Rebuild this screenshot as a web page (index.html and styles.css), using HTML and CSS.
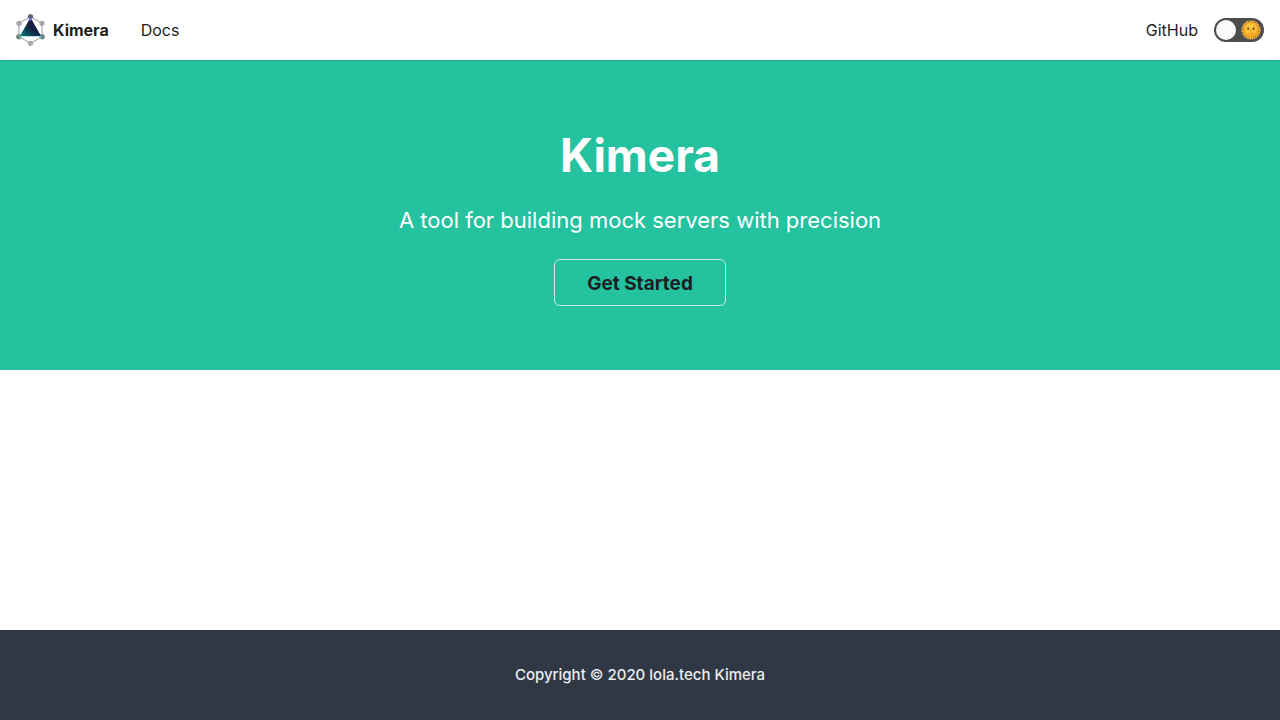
FILE: index.html
```html
<!DOCTYPE html>
<html lang="en">
<head>
  <meta charset="utf-8">
  <meta name="viewport" content="width=device-width, initial-scale=1">
  <title>Kimera</title>
  <link rel="stylesheet" href="styles.css">
</head>
<body>
  <nav class="navbar">
    <div class="navbar-items">
      <a class="brand" href="#">
        <svg class="logo" viewBox="0 0 29 32" aria-hidden="true">
          <defs>
            <linearGradient id="face" x1="0" y1="1" x2="0.75" y2="0.2">
              <stop offset="0" stop-color="#078b8c"/>
              <stop offset="0.4" stop-color="#0b3e55"/>
              <stop offset="0.65" stop-color="#12203f"/>
              <stop offset="1" stop-color="#171f49"/>
            </linearGradient>
            <linearGradient id="tip" x1="0" y1="0" x2="0" y2="1">
              <stop offset="0" stop-color="#777774"/>
              <stop offset="0.5" stop-color="#55596a"/>
              <stop offset="1" stop-color="#8585f5"/>
            </linearGradient>
            <linearGradient id="left" x1="0" y1="0" x2="1" y2="0">
              <stop offset="0" stop-color="#6b6865"/>
              <stop offset="1" stop-color="#6cc5b8"/>
            </linearGradient>
            <linearGradient id="right" x1="1" y1="0" x2="0" y2="0">
              <stop offset="0" stop-color="#6b6865"/>
              <stop offset="1" stop-color="#65b9d3"/>
            </linearGradient>
          </defs>
          <path d="M14.5 2.5 26 9.3V22.7L14.5 29.3 3 22.7V9.3Z" fill="none" stroke="#9a9a9f" stroke-width="1"/>
          <circle cx="3" cy="9.3" r="2.6" fill="#a5a5a9"/>
          <circle cx="26" cy="9.3" r="2.6" fill="#a5a5a9"/>
          <circle cx="14.5" cy="29.3" r="2.6" fill="#a9a9ad"/>
          <circle cx="14.5" cy="2.6" r="2.6" fill="url(#tip)"/>
          <circle cx="3" cy="22.7" r="2.7" fill="url(#left)"/>
          <circle cx="26" cy="22.7" r="2.7" fill="url(#right)"/>
          <path d="M14.5 3.5 25 22H4Z" fill="url(#face)"/>
          <path d="M14.5 3 16.4 6.6H12.6Z" fill="#6868d8"/>
          <path d="M4.5 22.5H24.5" stroke="#b6dbe0" stroke-width="1"/>
        </svg>
        <strong>Kimera</strong>
      </a>
      <a class="nav-link" href="#">Docs</a>
    </div>
    <div class="navbar-items navbar-end">
      <a class="nav-link" href="#">GitHub</a>
      <label class="toggle">
        <input class="toggle-input" type="checkbox" role="switch" aria-label="Dark mode">
        <span class="toggle-thumb"></span>
        <svg class="sun" viewBox="0 0 20 20" aria-hidden="true">
          <defs>
            <radialGradient id="sunface" cx="0.45" cy="0.35" r="0.65">
              <stop offset="0" stop-color="#ffd84c"/>
              <stop offset="0.65" stop-color="#ffbd2f"/>
              <stop offset="1" stop-color="#f19a19"/>
            </radialGradient>
          </defs>
          <circle cx="10" cy="10" r="8.6" fill="none" stroke="#fbbd36" stroke-width="2" stroke-dasharray="1.6 0.65"/>
          <circle cx="10" cy="10" r="7.9" fill="#f6ab22"/>
          <circle cx="10" cy="10" r="6.8" fill="url(#sunface)"/>
          <ellipse cx="7.2" cy="8.7" rx="1.1" ry="1.2" fill="#74501b"/>
          <ellipse cx="12.6" cy="8.7" rx="1.1" ry="1.2" fill="#74501b"/>
          <path d="M5.7 7.2Q7 6.2 8.4 7.1M11.5 7.1Q12.8 6.2 14.2 7.2M9.9 8.5 9.3 11H10.7M7.7 13Q10 14 12.2 13" fill="none" stroke="#d98b20" stroke-width="0.7"/>
        </svg>
      </label>
    </div>
  </nav>

  <header class="hero">
    <h1 class="hero-title">Kimera</h1>
    <p class="hero-subtitle">A tool for building mock servers with precision</p>
    <a class="button" href="#">Get Started</a>
  </header>

  <main class="content"></main>

  <footer class="footer">Copyright © 2020 lola.tech Kimera</footer>
</body>
</html>
```
FILE: styles.css
```css
* {
  box-sizing: border-box;
}

body {
  margin: 0;
  min-height: 100vh;
  display: flex;
  flex-direction: column;
  background: #fff;
  color: #1c1e21;
  font-family: Inter, "Liberation Sans", sans-serif;
  font-size: 16px;
  line-height: 26px;
}

a {
  color: inherit;
  text-decoration: none;
}

.navbar {
  display: flex;
  justify-content: space-between;
  height: 60px;
  padding: 0 16px;
  background: #fff;
  box-shadow: 0 1px 2px rgba(0, 0, 0, 0.1);
  z-index: 1;
}

.navbar-items {
  display: flex;
  align-items: center;
  gap: 32px;
}

.navbar-end {
  gap: 16px;
}

.brand {
  display: flex;
  align-items: center;
  gap: 8px;
}

.logo {
  width: 29px;
  height: 32px;
}

.toggle {
  position: relative;
  display: flex;
  align-items: center;
  justify-content: space-between;
  width: 50px;
  height: 24px;
  padding: 0 3px 0 2px;
  border-radius: 12px;
  background: #4d4d4d;
  cursor: pointer;
}

.toggle-input {
  position: absolute;
  inset: 0;
  width: 100%;
  height: 100%;
  margin: 0;
  opacity: 0;
  cursor: pointer;
}

.toggle-thumb {
  width: 20px;
  height: 20px;
  border-radius: 50%;
  background: #fafafa;
}

.sun {
  width: 20px;
  height: 20px;
}

.hero {
  display: flex;
  flex-direction: column;
  align-items: center;
  padding: 64px 32px;
  background: #25c2a0;
  color: #fff;
  text-align: center;
}

.hero-title {
  margin: 0 0 18px;
  font-size: 46px;
  line-height: 62px;
}

.hero-subtitle {
  margin: 0 0 22px;
  font-size: 22px;
  line-height: 33px;
}

.button {
  padding: 11px 32px 9px;
  border: 1px solid #c9ebe3;
  border-radius: 6px;
  color: #1c1e21;
  font-size: 19px;
  font-weight: 700;
  line-height: 25px;
}

.content {
  flex: 1;
}

.footer {
  padding: 32px;
  background: #303846;
  color: #ebedf0;
  font-size: 15px;
  font-weight: 500;
  text-align: center;
}
```
